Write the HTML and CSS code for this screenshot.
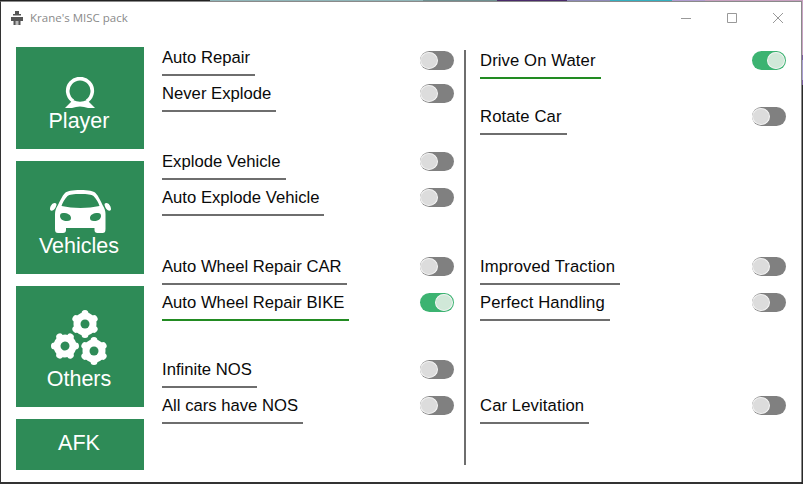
FILE: index.html
```html
<!DOCTYPE html>
<html lang="en">
<head>
    <meta charset="UTF-8">
    <meta name="viewport" content="width=device-width, initial-scale=1.0">
    <title>Krane's MISC pack</title>
    <link rel="stylesheet" href="styles.css">
</head>
<body>
    <div class="window">
        <div class="titlebar">
            <svg class="app-icon" viewBox="0 0 14 14">
                <path d="M5 0h4v3h2v1.500H3V3h2z" fill="#555"/>
                <path d="M1 6h12v4h-2.500v4h-7v-4H1z" fill="#555"/>
                <path d="M5.500 10h3v4h-3z" fill="#bbb"/>
            </svg>
            <span class="title">Krane's MISC pack</span>
            <div class="controls">
                <svg viewBox="0 0 12 12"><path d="M1 6.500h10" stroke="#999" fill="none"/></svg>
                <svg viewBox="0 0 12 12"><path d="M1.500 1.500h9v9h-9z" stroke="#999" fill="none"/></svg>
                <svg viewBox="0 0 12 12"><path d="M1 1l10 10M11 1L1 11" stroke="#999" fill="none"/></svg>
            </div>
        </div>
        <div class="content">
            <div class="sidebar">
                <div class="nav-btn player">
                    <svg class="ic-player" viewBox="0 0 30 32">
                        <path d="M8 24A12.300 12.300 0 1 1 22 24" fill="none" stroke="#fff" stroke-width="3.600"/>
                        <path d="M8 23L0 31h7q8-3 16 0h7L22 23q-7 3.500-14 0z" fill="#fff"/>
                    </svg>
                    <span>Player</span>
                </div>
                <div class="nav-btn vehicles">
                    <svg class="ic-car" viewBox="0 0 61 43">
                        <path fill-rule="evenodd" fill="#fff" d="M30.500 0c8 0 13 1 15 3 3 3 5 8 7 12 2 3 3 6 3 9v15c0 3-1 4-3 4h-5c-2 0-3-1-3-3v-2H16v2c0 2-1 3-3 3H8c-2 0-3-1-3-4V24c0-3 1-6 3-9 2-4 4-9 7-12 2-2 7-3 15.500-3zM30.500 4c-7 0-11 .5-13 2-3 3-5 7-6 10 6 1 12 2 19 2s13-1 19-2c-1-3-3-7-6-10-2-1.500-6-2-13-2zM13 23c-2 0-3 1-3 3 0 3 3 5 7 5 3 0 4-1 4-3 0-3-3-5-8-5zM48 23c-5 0-8 2-8 5 0 2 1 3 4 3 4 0 7-2 7-5 0-2-1-3-3-3z"/>
                        <path fill="#fff" d="M4.500 13c-2 0-4.500 3-4.500 6 0 2 2 2 3.500 1s3-4 3-5.500c0-1-1-1.500-2-1.500zM56.500 13c2 0 4.500 3 4.500 6 0 2-2 2-3.500 1s-3-4-3-5.500c0-1 1-1.500 2-1.500z"/>
                    </svg>
                    <span>Vehicles</span>
                </div>
                <div class="nav-btn others">
                    <svg class="ic-gears" viewBox="0 0 58 58">
                        <defs>
                            <g id="gear">
                                <circle r="11.500" fill="#fff"/>
                                <path d="M0-10v-.5M0 10v.5M8.700-5l.4-.25M-8.700 5l-.4.25M8.700 5l.4.25M-8.700-5l-.4-.25" stroke="#fff" stroke-width="7" stroke-linecap="round"/>
                                <circle r="4.500" fill="#2e8b57"/>
                            </g>
                        </defs>
                        <use href="#gear" x="34" y="15"/>
                        <use href="#gear" transform="translate(14 37) rotate(30)"/>
                        <use href="#gear" x="43" y="42"/>
                    </svg>
                    <span>Others</span>
                </div>
                <div class="nav-btn afk"><span>AFK</span></div>
            </div>
            <div class="col col-left">
                <div class="row first"><span class="label">Auto Repair</span><i class="toggle"></i></div>
                <div class="row r2"><span class="label">Never Explode</span><i class="toggle"></i></div>
                <div class="row r3"><span class="label">Explode Vehicle</span><i class="toggle"></i></div>
                <div class="row r2"><span class="label">Auto Explode Vehicle</span><i class="toggle"></i></div>
                <div class="row r4"><span class="label">Auto Wheel Repair CAR</span><i class="toggle"></i></div>
                <div class="row r2 on"><span class="label">Auto Wheel Repair BIKE</span><i class="toggle"></i></div>
                <div class="row r5"><span class="label">Infinite NOS</span><i class="toggle"></i></div>
                <div class="row r2"><span class="label">All cars have NOS</span><i class="toggle"></i></div>
            </div>
            <div class="col col-right">
                <div class="row on"><span class="label">Drive On Water</span><i class="toggle"></i></div>
                <div class="row r6"><span class="label">Rotate Car</span><i class="toggle"></i></div>
                <div class="row r7"><span class="label">Improved Traction</span><i class="toggle"></i></div>
                <div class="row r2"><span class="label">Perfect Handling</span><i class="toggle"></i></div>
                <div class="row r8"><span class="label">Car Levitation</span><i class="toggle"></i></div>
            </div>
        </div>
    </div>
</body>
</html>
```

FILE: styles.css
```css
html, body { margin: 0; padding: 0; height: 100%; overflow: hidden; }
body {
    background:
        linear-gradient(to right, #222 210px, #8fb5b8 210px 423px, #6e8f90 423px 497px, #4a2a6a 497px 567px, #8e8ab8 567px 610px, #35b0c0 610px 672px, #b09cd0 672px 705px, #c8a0c0 705px) top / 100% 1px no-repeat,
        linear-gradient(to bottom, #c8a4c4 55px, #7a5ca0 55px 60px, #a89cd0 60px 80px, #7a5ca0 80px 85px, #2a2a2a 85px) right / 2px 100% no-repeat,
        #333;
}
.window { width: 802px; height: 481px; margin-top: 1px; background: #fff; border-top: 1px solid #8a8a8a; border-right: 1px solid #8a8a8a; border-left: 1px solid #333; box-sizing: border-box; font-family: "Open Sans", "Noto Sans", sans-serif; }
.titlebar { display: flex; align-items: center; height: 31px; padding-left: 9px; }
.app-icon { width: 14px; height: 14px; }
.title { margin-left: 6px; font-size: 11.5px; color: #8a8a8a; }
.controls { display: flex; gap: 34px; margin-left: auto; margin-right: 17px; }
.controls svg { width: 12px; height: 12px; }
.content { display: flex; }
.sidebar { display: flex; flex-direction: column; gap: 12px; width: 128px; margin: 14px 0 0 15px; }
.nav-btn { display: flex; flex-direction: column; align-items: center; justify-content: flex-end; box-sizing: border-box; padding-bottom: 16px; background: #2e8b57; color: #fff; font-family: "Liberation Sans", Arial, sans-serif; font-size: 21.5px; line-height: 24px; }
.nav-btn span { margin-right: 2px; }
.player { height: 102px; }
.vehicles { height: 113px; }
.others { height: 121px; }
.afk { height: 51px; padding-bottom: 15px; }
.ic-player { width: 30px; height: 32px; }
.ic-car { width: 61px; height: 43px; margin-bottom: 1px; }
.ic-gears { width: 58px; height: 58px; }
.col { box-sizing: border-box; display: flex; flex-direction: column; }
.col-left { width: 292px; margin: 15px 0 0 18px; }
.col-right { width: 322px; height: 415px; margin: 17px 0 0 10px; padding: 1px 0 0 14px; border-left: 2px solid #6e6e6e; letter-spacing: 0.1px; }
.row { display: flex; justify-content: space-between; align-items: flex-start; height: 28px; }
.label { display: block; box-sizing: border-box; height: 28px; padding-right: 5px; font-family: "Liberation Sans", Arial, sans-serif; font-size: 16.67px; line-height: 20px; color: #0a0a0a; border-bottom: 2px solid #6e6e6e; }
.first .toggle { margin-top: 3px; }
.r2 { margin-top: 8px; }
.r3 { margin-top: 40px; }
.r4 { margin-top: 41px; }
.r5 { margin-top: 39px; }
.r6 { margin-top: 28px; }
.r7 { margin-top: 122px; }
.r8 { margin-top: 75px; }
.toggle { display: block; position: relative; width: 34px; height: 19px; border-radius: 10px; background: #808080; }
.toggle::after { content: ""; position: absolute; left: 0; top: 1px; width: 18px; height: 17px; border-radius: 50%; background: #dcdcdc; border: 1px solid #f4f4f4; box-sizing: border-box; }
.on .label { border-bottom-color: #228b22; }
.on .toggle { background: #3cb371; }
.on .toggle::after { left: auto; right: 1px; background: #d0e8d8; }
```
